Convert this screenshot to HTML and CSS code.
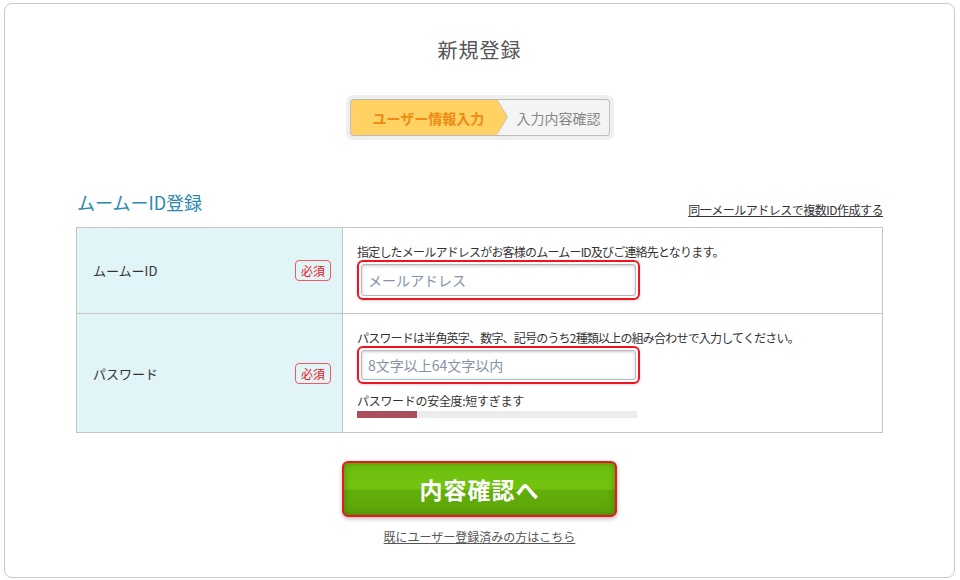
FILE: index.html
```html
<!DOCTYPE html>
<html lang="ja">
<head>
<meta charset="utf-8">
<title>新規登録</title>
<link rel="stylesheet" href="styles.css">
</head>
<body>
<div class="card">
  <h1 class="title">新規登録</h1>
  <div class="steps-wrap">
    <div class="steps">
      <div class="step step-active">ユーザー情報入力</div>
      <div class="step step-next">入力内容確認</div>
    </div>
  </div>
  <div class="content">
    <div class="section-head">
      <h2 class="section-title">ムームーID登録</h2>
      <a class="multi-link" href="#">同一メールアドレスで複数ID作成する</a>
    </div>
    <div class="form-table">
      <div class="row row-id">
        <div class="label-cell"><span class="label">ムームーID</span><span class="badge">必須</span></div>
        <div class="field-cell">
          <p class="note">指定したメールアドレスがお客様のムームーID及びご連絡先となります。</p>
          <div class="input-ring"><input class="input" type="text" placeholder="メールアドレス"></div>
        </div>
      </div>
      <div class="row row-pw">
        <div class="label-cell"><span class="label">パスワード</span><span class="badge">必須</span></div>
        <div class="field-cell">
          <p class="note">パスワードは半角英字、数字、記号のうち2種類以上の組み合わせで入力してください。</p>
          <div class="input-ring"><input class="input" type="password" placeholder="8文字以上64文字以内"></div>
          <p class="strength">パスワードの安全度:短すぎます</p>
          <div class="meter"><div class="meter-fill" style="width:60px"></div></div>
        </div>
      </div>
    </div>
    <div class="actions">
      <button class="submit" type="button">内容確認へ</button>
      <a class="login-link" href="#">既にユーザー登録済みの方はこちら</a>
    </div>
  </div>
</div>
</body>
</html>
```
FILE: styles.css
```css
* { box-sizing: border-box; }
html, body { margin: 0; padding: 0; background: #fff; }
body {
  font-family: "Noto Sans CJK JP", "Noto Sans", sans-serif;
  color: #333;
  font-size: 12px;
}
.card {
  margin: 3px 0 0 4px;
  width: 951px;
  height: 575px;
  border: 1px solid #c8c8c8;
  border-radius: 8px;
  padding-top: 33px;
}
.title {
  margin: 0;
  text-align: center;
  font-size: 20px;
  font-weight: normal;
  line-height: 26px;
  color: #555;
  letter-spacing: 1px;
}
.steps-wrap {
  display: flex;
  justify-content: center;
  margin-top: 32px;
}
.steps {
  display: flex;
  background: #efefef;
  border-radius: 7px;
  padding: 4px;
}
.step {
  height: 37px;
  display: flex;
  align-items: center;
  font-size: 14px;
  border: 1px solid #bdbdbd;
}
.step-active {
  width: 147px;
  background: #ffd263;
  color: #f08a12;
  font-weight: bold;
  border-right: none;
  border-radius: 4px 0 0 4px;
  padding-left: 22px;
  position: relative;
  z-index: 1;
}
.step-active::before {
  content: "";
  position: absolute;
  right: -11px;
  top: -1px;
  border-style: solid;
  border-width: 18.5px 0 18.5px 11px;
  border-color: transparent transparent transparent #bdbdbd;
}
.step-active::after {
  content: "";
  position: absolute;
  right: -10px;
  top: 0;
  border-style: solid;
  border-width: 17.5px 0 17.5px 10px;
  border-color: transparent transparent transparent #ffd263;
}
.step-next {
  width: 113px;
  background: #f4f4f4;
  color: #888;
  border-left: none;
  border-radius: 0 4px 4px 0;
  padding-left: 20px;
}
.content {
  width: 807px;
  margin: 0 auto;
}
.section-head {
  margin-top: 50px;
  display: flex;
  justify-content: space-between;
  align-items: flex-end;
  padding-bottom: 13px;
}
.section-title {
  margin: 0 0 0 1px;
  font-size: 18px;
  font-weight: normal;
  line-height: 24px;
  color: #2b88b0;
}
.multi-link {
  color: #333;
  font-size: 12px;
  letter-spacing: -0.5px;
  text-decoration: underline;
  line-height: 16px;
  margin-bottom: -4px;
}
.form-table {
  border: 1px solid #c4c4c4;
}
.row {
  display: flex;
}
.row + .row {
  border-top: 1px solid #c4c4c4;
}
.row-id { height: 85px; }
.row-pw { height: 119px; }
.label-cell {
  width: 266px;
  background: #e1f4f8;
  border-right: 1px solid #c4c4c4;
  display: flex;
  align-items: center;
  justify-content: space-between;
  padding: 0 11px 0 16px;
}
.label {
  font-size: 13px;
  color: #333;
}
.badge {
  width: 36px;
  height: 21px;
  border: 1px solid #f05a5a;
  border-radius: 4px;
  color: #e8141e;
  font-size: 12px;
  display: flex;
  align-items: center;
  justify-content: center;
}
.field-cell {
  flex: 1;
  padding: 15px 0 0 14px;
}
.note {
  margin: 0;
  font-size: 12px;
  letter-spacing: -0.8px;
  line-height: 17px;
  color: #333;
}
.input-ring {
  width: 283px;
  height: 40px;
  margin-top: 0;
  border: 2px solid #f0141e;
  border-radius: 6px;
  padding: 2px;
  box-shadow: 0 1px 3px rgba(0,0,0,0.15);
}
.input {
  display: block;
  width: 100%;
  height: 100%;
  border: 1px solid #b8b8b8;
  border-radius: 3px;
  box-shadow: inset 0 1px 3px rgba(0,0,0,0.2);
  padding: 0 6px;
  font-family: "Noto Sans CJK JP", "Noto Sans", sans-serif;
  font-size: 14px;
  color: #333;
  outline: none;
}
.input::placeholder { color: #8593a6; }
.row-pw .input-ring { margin-top: 0; height: 38px; }
.strength {
  margin: 8px 0 0;
  font-size: 12px;
  letter-spacing: -0.3px;
  line-height: 18px;
  color: #333;
}
.meter {
  margin-top: 1px;
  width: 280px;
  height: 7px;
  background: #ececec;
}
.meter-fill {
  height: 100%;
  background: #a94e5d;
}
.actions {
  display: flex;
  flex-direction: column;
  align-items: center;
  margin-top: 28px;
}
.submit {
  width: 275px;
  height: 56px;
  border: 2px solid #f0141e;
  border-radius: 6px;
  background: linear-gradient(to bottom, #6cbf0e 0%, #72c40f 50%, #62ae0a 52%, #5ca60a 100%);
  box-shadow: inset 0 0 6px rgba(40,80,0,0.5), 0 2px 4px rgba(0,0,0,0.25);
  color: #fff;
  font-family: "Noto Sans CJK JP", "Noto Sans", sans-serif;
  font-size: 23px;
  font-weight: bold;
  letter-spacing: 1px;
  cursor: pointer;
  padding: 0;
}
.login-link {
  margin-top: 12px;
  color: #555;
  font-size: 12px;
  line-height: 16px;
  text-decoration: underline;
}
```
